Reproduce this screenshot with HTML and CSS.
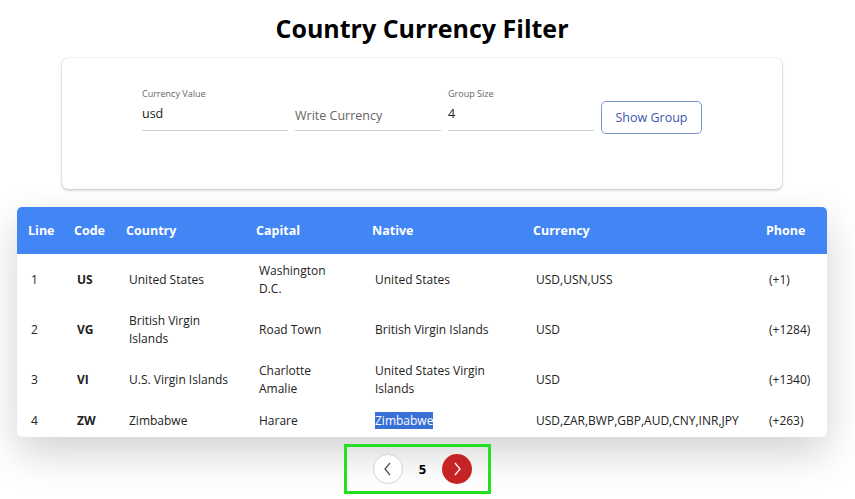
FILE: index.html
```html
<!DOCTYPE html>
<html>
<head>
<meta charset="utf-8">
<link rel="stylesheet" href="styles.css">
</head>
<body>
<div class="page">
  <h1 class="title">Country Currency Filter</h1>
  <div class="card">
    <div class="form">
      <div class="field">
        <span class="label">Currency Value</span>
        <span class="value">usd</span>
      </div>
      <div class="field">
        <span class="label"></span>
        <span class="value placeholder">Write Currency</span>
      </div>
      <div class="field">
        <span class="label">Group Size</span>
        <span class="value">4</span>
      </div>
      <button class="btn">Show Group</button>
    </div>
  </div>
  <div class="table-wrap">
    <table class="table">
      <colgroup>
        <col class="c-line"><col class="c-code"><col class="c-country"><col class="c-capital"><col class="c-native"><col class="c-currency"><col class="c-phone">
      </colgroup>
      <thead>
        <tr><th>Line</th><th>Code</th><th>Country</th><th>Capital</th><th>Native</th><th>Currency</th><th>Phone</th></tr>
      </thead>
      <tbody>
        <tr><td>1</td><td class="code">US</td><td>United States</td><td>Washington D.C.</td><td>United States</td><td>USD,USN,USS</td><td>(+1)</td></tr>
        <tr><td>2</td><td class="code">VG</td><td>British Virgin Islands</td><td>Road Town</td><td>British Virgin Islands</td><td>USD</td><td>(+1284)</td></tr>
        <tr><td>3</td><td class="code">VI</td><td>U.S. Virgin Islands</td><td>Charlotte Amalie</td><td>United States Virgin Islands</td><td>USD</td><td>(+1340)</td></tr>
        <tr class="last"><td>4</td><td class="code">ZW</td><td>Zimbabwe</td><td>Harare</td><td><span class="sel">Zimbabwe</span></td><td>USD,ZAR,BWP,GBP,AUD,CNY,INR,JPY</td><td>(+263)</td></tr>
      </tbody>
    </table>
  </div>
  <div class="pager">
    <button class="pg prev"><svg width="12" height="14" viewBox="0 0 12 14"><path d="M8 1 L3 7 L8 13" fill="none" stroke="#555" stroke-width="1.3"/></svg></button>
    <span class="num">5</span>
    <button class="pg next"><svg width="12" height="14" viewBox="0 0 12 14"><path d="M4 1 L9 7 L4 13" fill="none" stroke="#fff" stroke-width="1.3"/></svg></button>
  </div>
</div>
</body>
</html>
```
FILE: styles.css
```css
html, body {
  margin: 0;
  padding: 0;
  background: #fff;
  font-family: "Open Sans", "Noto Sans", sans-serif;
  color: #222;
}
.page {
  width: 844px;
  display: flex;
  flex-direction: column;
  align-items: center;
}
.title {
  margin: 11px 0 0;
  font-size: 25px;
  line-height: 34px;
  font-weight: 700;
  color: #000;
}
.card {
  margin-top: 13px;
  width: 720px;
  height: 131px;
  box-sizing: border-box;
  background: #fff;
  border-radius: 6px;
  box-shadow: 0 1px 3px rgba(0,0,0,0.25), 0 0 1px rgba(0,0,0,0.15);
  padding: 30px 0 0 80px;
}
.form {
  display: flex;
  align-items: flex-start;
  gap: 7px;
}
.field {
  width: 146px;
  height: 43px;
  box-sizing: border-box;
  border-bottom: 1px solid #cfcfcf;
  display: flex;
  flex-direction: column;
}
.label {
  font-size: 9px;
  line-height: 12px;
  height: 12px;
  color: #666;
}
.value {
  margin-top: 6px;
  font-size: 12.5px;
  line-height: 16px;
  color: #222;
}
.value.placeholder {
  margin-top: 8px;
  color: #666;
}
.btn {
  margin-top: 13px;
  width: 101px;
  height: 33px;
  background: #fff;
  border: 1px solid #7a94cc;
  border-radius: 5px;
  color: #3a55b0;
  font-family: inherit;
  font-size: 12.5px;
  padding: 0;
}
.table-wrap {
  margin-top: 18px;
  width: 810px;
  border-radius: 5px;
  overflow: hidden;
  background: #fff;
  box-shadow: 0 16px 40px rgba(0,0,0,0.18);
}
.table {
  width: 810px;
  border-collapse: collapse;
  table-layout: fixed;
}
.c-line { width: 46px; }
.c-code { width: 52px; }
.c-country { width: 130px; }
.c-capital { width: 116px; }
.c-native { width: 161px; }
.c-currency { width: 233px; }
.c-phone { width: 72px; }
.table th {
  background: #4285f4;
  color: #fff;
  height: 47px;
  padding: 0 0 0 11px;
  text-align: left;
  font-size: 12.5px;
  font-weight: 700;
}
.table td {
  padding: 8px 14px 6px 14px;
  font-size: 12px;
  line-height: 18px;
  color: #222;
  vertical-align: middle;
}
.table tr.last td {
  padding-bottom: 7px;
}
.table td:last-child {
  padding-right: 2px;
}
.table td.code {
  font-weight: 700;
}
.sel {
  background: #3a6fd6;
  color: #fff;
}
.pager {
  margin: 7px 9px 0 0;
  width: 147px;
  height: 50px;
  box-sizing: border-box;
  border: 3px solid #22e022;
  display: flex;
  align-items: center;
  justify-content: flex-start;
  padding-left: 26px;
}
.pg {
  width: 30px;
  height: 30px;
  border-radius: 50%;
  padding: 0;
  display: flex;
  align-items: center;
  justify-content: center;
}
.prev {
  background: #fff;
  border: 1px solid #d4d4d4;
}
.next {
  background: #c62424;
  border: none;
}
.num {
  width: 39px;
  text-align: center;
  font-weight: 700;
  font-size: 13px;
  color: #000;
}
```
